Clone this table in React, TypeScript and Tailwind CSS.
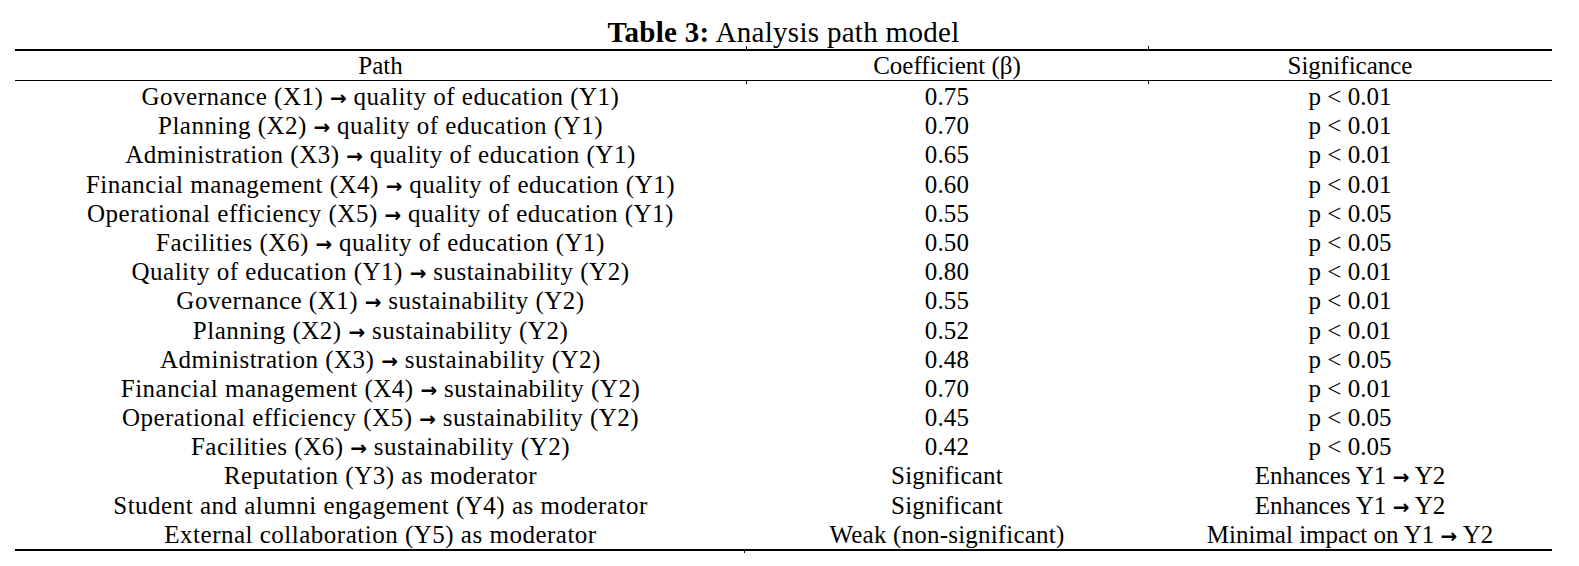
import React from "react";

const rows: [string, string, string][] = [
  ["Governance (X1) → quality of education (Y1)", "0.75", "p < 0.01"],
  ["Planning (X2) → quality of education (Y1)", "0.70", "p < 0.01"],
  ["Administration (X3) → quality of education (Y1)", "0.65", "p < 0.01"],
  ["Financial management (X4) → quality of education (Y1)", "0.60", "p < 0.01"],
  ["Operational efficiency (X5) → quality of education (Y1)", "0.55", "p < 0.05"],
  ["Facilities (X6) → quality of education (Y1)", "0.50", "p < 0.05"],
  ["Quality of education (Y1) → sustainability (Y2)", "0.80", "p < 0.01"],
  ["Governance (X1) → sustainability (Y2)", "0.55", "p < 0.01"],
  ["Planning (X2) → sustainability (Y2)", "0.52", "p < 0.01"],
  ["Administration (X3) → sustainability (Y2)", "0.48", "p < 0.05"],
  ["Financial management (X4) → sustainability (Y2)", "0.70", "p < 0.01"],
  ["Operational efficiency (X5) → sustainability (Y2)", "0.45", "p < 0.05"],
  ["Facilities (X6) → sustainability (Y2)", "0.42", "p < 0.05"],
  ["Reputation (Y3) as moderator", "Significant", "Enhances Y1 → Y2"],
  ["Student and alumni engagement (Y4) as moderator", "Significant", "Enhances Y1 → Y2"],
  ["External collaboration (Y5) as moderator", "Weak (non-significant)", "Minimal impact on Y1 → Y2"],
];

function Txt({ s }: { s: string }) {
  const parts = s.split(" → ");
  return (
    <>
      {parts.map((p, i) => (
        <React.Fragment key={i}>
          {i > 0 && (
            <>
              {" "}
              <span
                className="text-[20px] leading-none font-bold tracking-normal"
                style={{ fontFamily: '"DejaVu Sans", sans-serif' }}
              >
                →
              </span>{" "}
            </>
          )}
          {p}
        </React.Fragment>
      ))}
    </>
  );
}

function Tick({ left, top }: { left: number; top: number }) {
  return <div className="absolute w-px h-[3px] bg-black" style={{ left, top }} />;
}

export default function App() {
  return (
    <div
      className="w-[1579px] h-[566px] bg-white text-black overflow-hidden"
      style={{ fontFamily: '"Liberation Serif", "Times New Roman", serif' }}
    >
      <div className="pt-[17px] pb-px pr-[12px] text-center text-[29px] leading-[31px] tracking-[0.3px]">
        <span className="font-bold">Table 3:</span> Analysis path model
      </div>
      <div className="relative ml-[15px] w-[1537px]">
        <Tick left={731} top={-3} />
        <Tick left={1133} top={-3} />
        <div className="h-[1.5px] bg-black" />
        <div className="grid grid-cols-[731px_402px_404px] text-center text-[25px] leading-[29px]">
          <div>Path</div>
          <div>Coefficient (β)</div>
          <div>Significance</div>
        </div>
        <div className="relative h-[1.5px] bg-black">
          <Tick left={731} top={1} />
          <Tick left={1133} top={1} />
        </div>
        <div className="grid grid-cols-[731px_402px_404px] auto-rows-[29.2px] text-center text-[25px] leading-[29.2px] pt-px">
          {rows.map((r, i) => (
            <React.Fragment key={i}>
              <div className="whitespace-nowrap h-[29.2px] tracking-[0.5px]">
                <Txt s={r[0]} />
              </div>
              <div className="whitespace-nowrap h-[29.2px] tracking-[0.2px]">{r[1]}</div>
              <div className="whitespace-nowrap h-[29.2px]">
                <Txt s={r[2]} />
              </div>
            </React.Fragment>
          ))}
        </div>
        <div className="relative h-[1.5px] bg-black">
          <Tick left={729} top={1} />
        </div>
      </div>
    </div>
  );
}
